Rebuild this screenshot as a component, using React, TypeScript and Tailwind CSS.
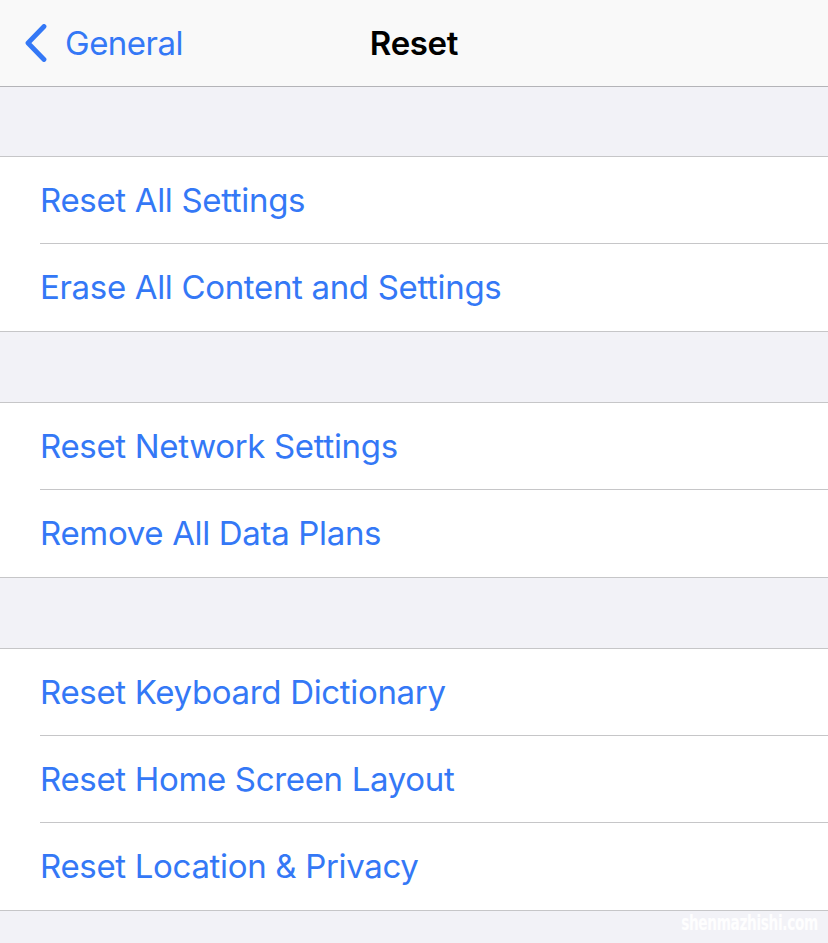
const sections: string[][] = [
  ["Reset All Settings", "Erase All Content and Settings"],
  ["Reset Network Settings", "Remove All Data Plans"],
  ["Reset Keyboard Dictionary", "Reset Home Screen Layout", "Reset Location & Privacy"],
];

const font = { fontFamily: "Inter, 'Noto Sans', sans-serif" };

function NavBar() {
  return (
    <div className="relative flex h-[87px] items-center justify-center border-b border-[#b4b4b8] bg-[#f9f9f9]">
      <button type="button" className="absolute left-[25px] top-0 flex h-full items-center gap-[18px] text-[#3478f6]">
        <svg width="22" height="38" viewBox="0 0 22 38" fill="none" aria-hidden="true">
          <path d="M19 2.5 3 19 19 35.5" stroke="currentColor" strokeWidth="4.8" strokeLinecap="round" strokeLinejoin="round" />
        </svg>
        <span className="text-[33px] leading-none tracking-[-0.015em]">General</span>
      </button>
      <h1 className="text-[33px] font-semibold leading-none tracking-[-0.01em] text-black">Reset</h1>
    </div>
  );
}

function Group({ items }: { items: string[] }) {
  return (
    <div className="border-y border-[#c6c6c8] bg-white">
      {items.map((label, i) => (
        <div key={label} className="flex h-[87px] flex-col pl-[40px]">
          <div className="flex flex-1 items-center text-[33px] leading-none tracking-[-0.01em] text-[#3478f6]">
            {label}
          </div>
          {i < items.length - 1 && <div className="h-px bg-[#c6c6c8]" />}
        </div>
      ))}
    </div>
  );
}

export default function App() {
  return (
    <div className="relative h-[943px] w-[828px] overflow-hidden bg-[#f2f2f7]" style={font}>
      <NavBar />
      <div className="h-[69px]" />
      <Group items={sections[0]} />
      <div className="h-[70px]" />
      <Group items={sections[1]} />
      <div className="h-[70px]" />
      <Group items={sections[2]} />
      <span
        className="absolute bottom-[4px] right-[10px] text-[21px] font-bold tracking-[-0.02em] text-white/90"
        style={{ fontFamily: "'DejaVu Sans Condensed', 'Liberation Sans Narrow', sans-serif", transform: "scaleX(0.72)", transformOrigin: "right" }}
      >
        shenmazhishi.com
      </span>
    </div>
  );
}
